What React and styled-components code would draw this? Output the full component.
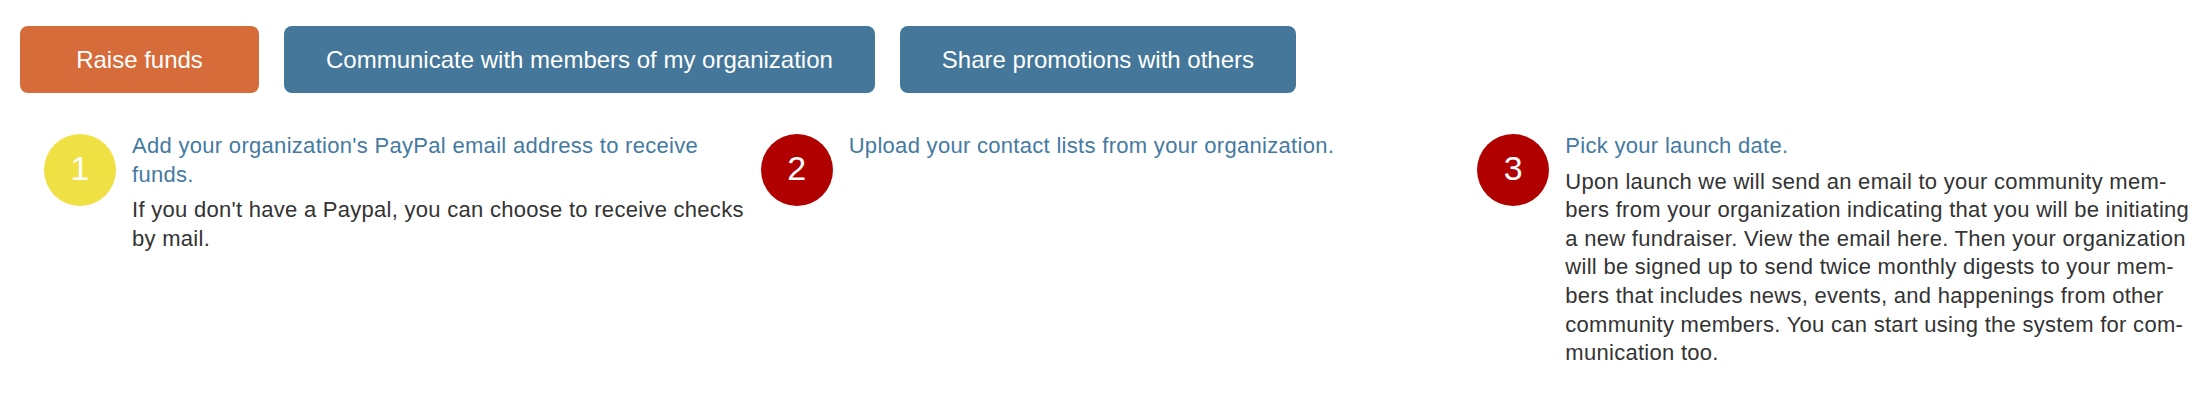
import React from "react";
import styled, { createGlobalStyle } from "styled-components";

const GlobalStyle = createGlobalStyle`
  html, body { margin: 0; padding: 0; background: #ffffff; }
  body { font-family: "Liberation Sans", Arial, Helvetica, sans-serif; color: #333333; }
  * { box-sizing: border-box; }
`;

const Page = styled.div`
  padding: 26px 16px 0 20px;
`;

const Toolbar = styled.div`
  display: flex;
  gap: 25px;
`;

const ActionButton = styled.button`
  height: 67px;
  min-width: 239px;
  padding: 0 42px;
  border: none;
  border-radius: 8px;
  background: ${(p) => (p.$active ? "#d66c3a" : "#447799")};
  color: #ffffff;
  font-family: "Liberation Sans", Arial, sans-serif;
  font-size: 24px;
  line-height: 28px;
  display: flex;
  align-items: center;
  justify-content: center;
  cursor: pointer;
`;

const Steps = styled.div`
  display: grid;
  grid-template-columns: repeat(3, 1fr);
  column-gap: 2px;
  padding-left: 24px;
  margin-top: 39px;
`;

const Step = styled.div`
  display: flex;
  align-items: flex-start;
`;

const Badge = styled.div`
  flex: 0 0 72px;
  width: 72px;
  height: 72px;
  margin-top: 2px;
  margin-right: 16px;
  border-radius: 50%;
  background: ${(p) => p.$color};
  color: #ffffff;
  font-size: 34px;
  display: flex;
  align-items: center;
  justify-content: center;
  padding-bottom: 4px;
`;

const StepText = styled.div`
  flex: 1;
  min-width: 0;
  font-size: 22px;
  line-height: 28.6px;
`;

const StepTitle = styled.div`
  color: #447aa1;
  letter-spacing: 0.3px;
  margin-bottom: 7px;
`;

const StepBody = styled.div`
  color: #333333;
  letter-spacing: 0.28px;
`;

const steps = [
  {
    n: "1",
    color: "#efe044",
    title: "Add your organization's PayPal email address to receive funds.",
    body: "If you don't have a Paypal, you can choose to receive checks by mail.",
  },
  {
    n: "2",
    color: "#b00000",
    title: "Upload your contact lists from your organization.",
    body: "",
  },
  {
    n: "3",
    color: "#b00000",
    title: "Pick your launch date.",
    body:
      "Upon launch we will send an email to your community mem\u00ADbers from your organization indicating that you will be initiating a new fundraiser. View the email here. Then your organization will be signed up to send twice monthly digests to your mem\u00ADbers that includes news, events, and happenings from other community members. You can start using the system for com\u00ADmu\u00ADni\u00ADca\u00ADtion too.",
  },
];

export default function App() {
  return (
    <>
      <GlobalStyle />
      <Page>
        <Toolbar>
          <ActionButton $active>Raise funds</ActionButton>
          <ActionButton>Communicate with members of my organization</ActionButton>
          <ActionButton>Share promotions with others</ActionButton>
        </Toolbar>
        <Steps>
          {steps.map((s) => (
            <Step key={s.n}>
              <Badge $color={s.color}>{s.n}</Badge>
              <StepText>
                <StepTitle>{s.title}</StepTitle>
                {s.body && <StepBody>{s.body}</StepBody>}
              </StepText>
            </Step>
          ))}
        </Steps>
      </Page>
    </>
  );
}
